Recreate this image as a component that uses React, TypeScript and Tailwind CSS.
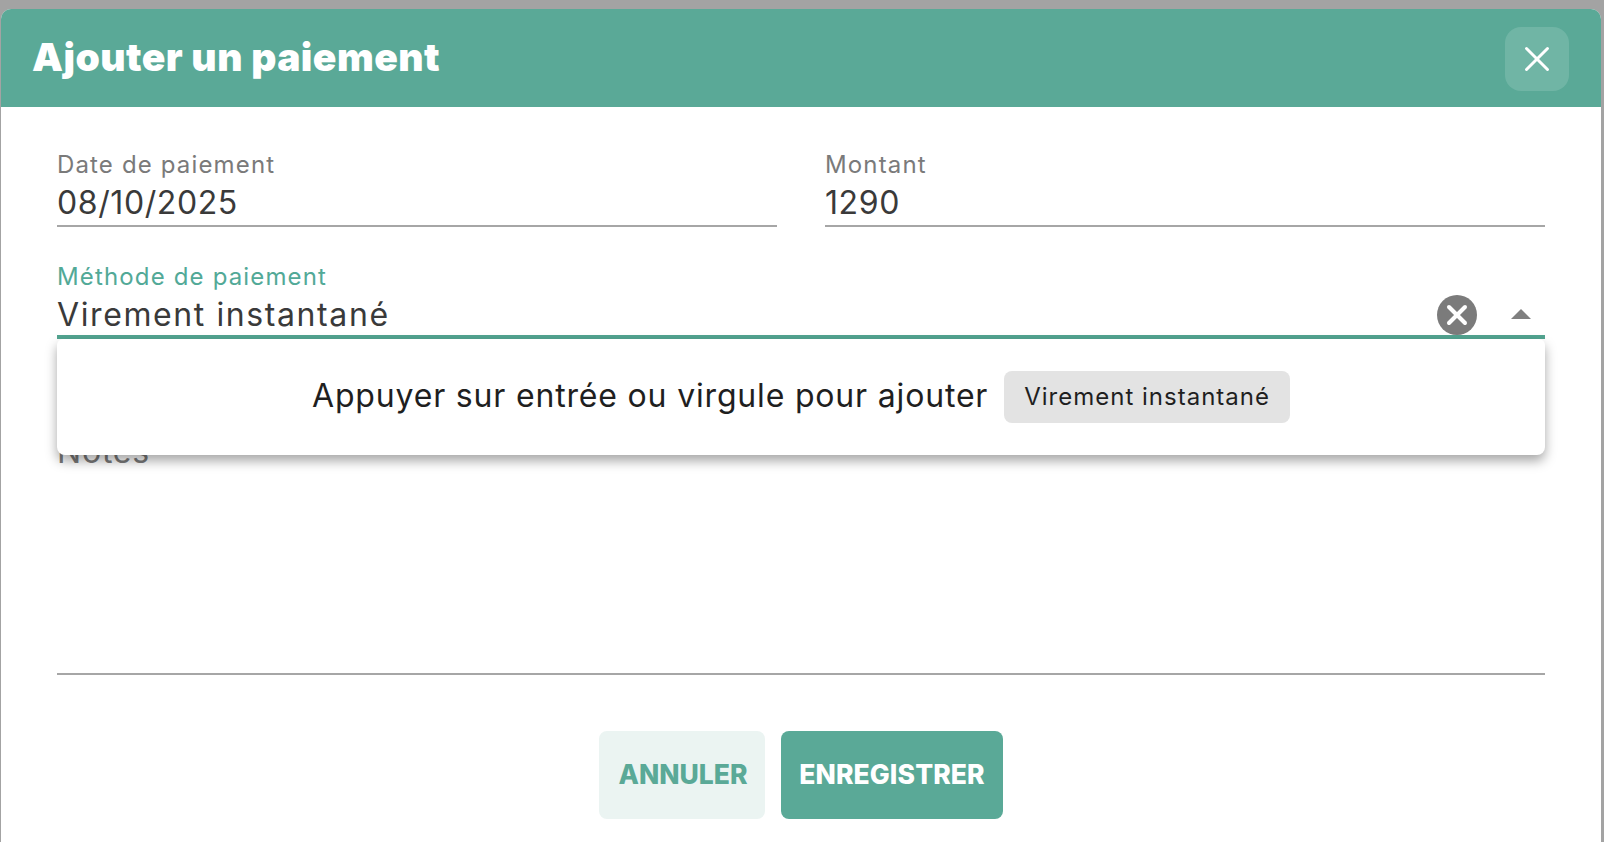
import React from "react";
import { X } from "lucide-react";

const sans = "font-['Inter','Noto_Sans',sans-serif]";

interface FieldProps {
  label: string;
  value: string;
}

const Field = ({ label, value }: FieldProps) => {
  return (
    <div className="flex-1 border-b-2 border-[#a6a6a6] h-[77px]">
      <p className="-mt-[1px] text-[24px] leading-[31px] text-[#7a7a7a] tracking-[1.15px]">{label}</p>
      <p className="mt-[4px] text-[32px] leading-[38px] text-[#3a3a3a] tracking-[0.6px]">{value}</p>
    </div>
  );
};

const App = () => {
  return (
    <div className={`${sans} h-[842px] overflow-hidden bg-[#a3a3a3] pt-[9px] pl-[1px] pr-[3px]`}>
      <div className="h-[833px] rounded-t-[10px] bg-white overflow-hidden">
        <header className="flex h-[98px] items-center justify-between bg-[#5aa997] pl-[31px] pr-[32px]">
          <h2 className="text-[39px] font-black text-white tracking-[0.45px] -mt-[2px]">Ajouter un paiement</h2>
          <button className="mt-[2px] flex h-[64px] w-[64px] items-center justify-center rounded-[16px] bg-[#70b5a5]">
            <X size={42} color="#fff" strokeWidth={1.7} />
          </button>
        </header>

        <div className="px-[56px] pt-[43px]">
          <div className="flex gap-[48px]">
            <Field label="Date de paiement" value="08/10/2025" />
            <Field label="Montant" value="1290" />
          </div>

          <div className="relative mt-[35px]">
            <div className="h-[77px] border-b-4 border-[#52a490]">
              <p className="text-[24px] leading-[29px] text-[#52a997] tracking-[1.15px]">Méthode de paiement</p>
              <div className="mt-[4px] flex items-center justify-between">
                <p className="text-[32px] leading-[38px] text-[#3a3a3a] tracking-[1.6px]">Virement instantané</p>
                <div className="flex items-center gap-[34px] pr-[14px]">
                  <span className="flex h-[40px] w-[40px] items-center justify-center rounded-full bg-[#7b7b7b]">
                    <X size={32} color="#fff" strokeWidth={3} />
                  </span>
                  <svg width="20" height="10" viewBox="0 0 20 10" className="mt-[-2px]">
                    <path d="M0 10 L10 0 L20 10 Z" fill="#808080" />
                  </svg>
                </div>
              </div>
            </div>

            <div className="absolute left-0 right-0 top-[77px] z-10 flex h-[116px] items-center justify-center gap-[16px] rounded-b-[8px] rounded-t-[6px] bg-white shadow-[0_6px_12px_rgba(0,0,0,0.35)]">
              <span className="-mt-[2px] text-[32px] text-[#1f1f1f] tracking-[0.82px]">Appuyer sur entrée ou virgule pour ajouter</span>
              <span className="flex h-[52px] items-center rounded-[8px] bg-[#e3e3e3] px-[20px] text-[24px] text-[#1f1f1f] tracking-[1px]">
                Virement instantané
              </span>
            </div>
          </div>

          <div className="mt-[35px] h-[301px] border-b-2 border-[#a6a6a6] pt-[59px]">
            <p className="text-[32px] leading-[38px] text-[#7a7a7a] tracking-[0.8px]">Notes</p>
          </div>

          <div className="mt-[56px] flex justify-center gap-[16px]">
            <button className="flex h-[88px] w-[166px] items-center justify-center rounded-[8px] bg-[#ebf4f2] pl-[2px] text-[26.5px] font-extrabold text-[#5aa997]">
              ANNULER
            </button>
            <button className="flex h-[88px] w-[222px] items-center justify-center rounded-[8px] bg-[#5aa997] text-[26.5px] font-extrabold text-white tracking-[0.1px]">
              ENREGISTRER
            </button>
          </div>
        </div>
      </div>
    </div>
  );
};

export default App;
